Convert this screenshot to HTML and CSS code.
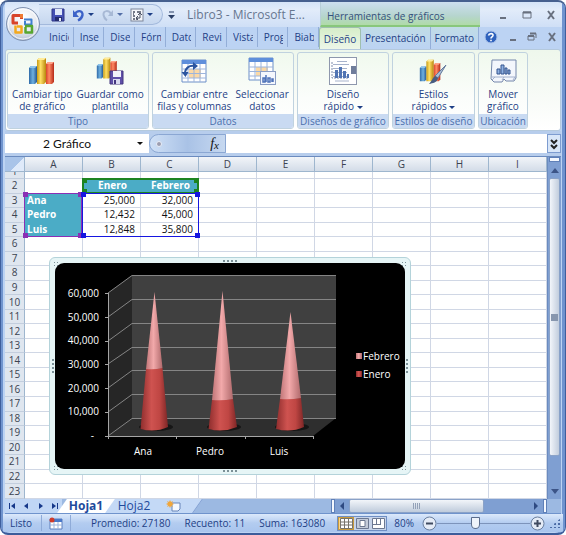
FILE: index.html
```html
<!DOCTYPE html>
<html lang="es">
<head>
  <meta charset="UTF-8">
  <meta name="viewport" content="width=device-width, initial-scale=1.0">
  <title>Libro3 - Microsoft Excel</title>
  <link rel="stylesheet" href="styles.css">
</head>
<body>
<div class="window">
  <!-- Office button -->
  <button class="office-button" aria-label="Botón de Office">
    <svg width="36" height="36" viewBox="0 0 36 36">
      <defs>
        <radialGradient id="orb" cx=".5" cy=".3" r=".75">
          <stop offset="0" stop-color="#fff"/><stop offset=".6" stop-color="#e3e7ef"/><stop offset="1" stop-color="#a9b6cb"/>
        </radialGradient>
      </defs>
      <circle cx="18" cy="18" r="16.5" fill="url(#orb)" stroke="#7f92b2"/>
      <circle cx="18" cy="18" r="15" fill="none" stroke="#fff" opacity=".8"/>
      <g fill="none" stroke-width="3" stroke-linejoin="round">
        <path d="M13 17H8V9.500H16.500V13" stroke="#d8432a"/>
        <path d="M16.500 12V8" stroke="#ee7a32"/>
        <path d="M19 13.500H26.500V18.500H20V15" stroke="#3f7fd0" stroke-width="2"/>
        <path d="M10.500 19.500V26.500H16.500V20.500H12" stroke="#f3a81d" stroke-width="2.500"/>
        <path d="M20 20H27V26.500H20.500V21" stroke="#57a62f" stroke-width="2.500"/>
      </g>
    </svg>
  </button>

  <!-- Title bar -->
  <header class="title-bar">
    <div class="quick-access">
      <button aria-label="Guardar">
        <svg width="14" height="14" viewBox="0 0 14 14"><path d="M1 1h12v12H1z" fill="#4550b4" stroke="#2f3786"/><path d="M4 1h7v6H4z" fill="#dfe8fa"/><path d="M4 9h7v4H4z" fill="#242c6e"/><path d="M8 10h2v3H8z" fill="#e7ecfa"/></svg>
      </button>
      <button class="split" aria-label="Deshacer">
        <svg width="13" height="14" viewBox="0 0 13 14"><path d="M3 6C5 2 11 2 10.500 7C10 10 8 11.500 6 12.500" fill="none" stroke="#3c62c8" stroke-width="2.400"/><path d="M1 2v7h6z" fill="#3c62c8"/></svg>
        <i class="arrow"></i>
      </button>
      <button class="split faded" aria-label="Rehacer">
        <svg width="13" height="14" viewBox="0 0 13 14"><path d="M10 6C8 2 2 2 2.500 7C3 10 4 11 6 12.500" fill="none" stroke="#96a9c8" stroke-width="2"/><path d="M12 2v6H7z" fill="#96a9c8"/></svg>
        <i class="arrow"></i>
      </button>
      <button class="split" aria-label="Seleccionar objetos">
        <svg width="14" height="14" viewBox="0 0 14 14"><rect x="1" y="1" width="12" height="12" fill="#f4f6fa" stroke="#7d869a"/><path d="M3 4h2M7 4h4M3 6h1M3 8h2M3 11h2M6 11h2" stroke="#4a5264" stroke-width="1.500"/><path d="M10 5v5H6M8 8l-2 2 2 2M8 7l2-2 2 2" fill="none" stroke="#4a5264"/></svg>
        <i class="arrow"></i>
      </button>
    </div>
    <button class="customize" aria-label="Personalizar barra"><svg width="8" height="8" viewBox="0 0 8 8"><path d="M2 1h5" stroke="#2b3f66"/><path d="M1 4h7L4.500 8z" fill="#2b3f66"/></svg></button>
    <h1 class="title">Libro3 - Microsoft E...</h1>
    <div class="context-title">Herramientas de gráficos</div>
    <div class="controls">
      <button aria-label="Minimizar"><svg width="10" height="10" viewBox="0 0 10 10"><path d="M2 8h6" stroke="#68707f" stroke-width="2"/></svg></button>
      <button aria-label="Maximizar"><svg width="10" height="10" viewBox="0 0 10 10"><path d="M1 2h8v6H1z" fill="none" stroke="#68707f"/><path d="M1 2.500h8" stroke="#68707f" stroke-width="2"/></svg></button>
      <button aria-label="Cerrar"><svg width="10" height="10" viewBox="0 0 10 10"><path d="M2 1l6 8M8 1L2 9" stroke="#68707f" stroke-width="2"/></svg></button>
    </div>
  </header>

  <!-- Ribbon tabs -->
  <nav class="tabs">
    <div class="main-tabs">
      <button><span>Inicio</span></button>
      <button><span>Insertar</span></button>
      <button><span>Diseño</span></button>
      <button><span>Fórmulas</span></button>
      <button><span>Datos</span></button>
      <button><span>Revisar</span></button>
      <button><span>Vista</span></button>
      <button><span>Prog</span></button>
      <button><span>Biab</span></button>
    </div>
    <div class="context-tabs">
      <button class="active">Diseño</button>
      <button>Presentación</button>
      <button>Formato</button>
    </div>
    <div class="controls">
      <button aria-label="Ayuda"><svg width="14" height="14" viewBox="0 0 14 14"><circle cx="7" cy="7" r="6" fill="#2f62bd" stroke="#a9c0e8"/><path d="M4.500 5.500C5 3 9.500 3 9 5.500C8.800 7 7 7 7 8.500M7 9.800v1.500" fill="none" stroke="#fff" stroke-width="1.600"/></svg></button>
      <button aria-label="Minimizar libro"><svg width="10" height="10" viewBox="0 0 10 10"><path d="M2 8h6" stroke="#68707f" stroke-width="2"/></svg></button>
      <button aria-label="Restaurar libro"><svg width="10" height="10" viewBox="0 0 10 10"><path d="M3 1.500h6V6M1 4h6v4H1z" fill="none" stroke="#68707f"/><path d="M3 1.500h6M1 4h6" stroke="#68707f" stroke-width="2"/></svg></button>
      <button aria-label="Cerrar libro"><svg width="10" height="10" viewBox="0 0 10 10"><path d="M2 1l6 8M8 1L2 9" stroke="#68707f" stroke-width="2"/></svg></button>
    </div>
  </nav>

  <!-- Ribbon -->
  <section class="ribbon">
    <svg width="0" height="0" class="defs">
      <defs>
        <linearGradient id="b1"><stop offset="0" stop-color="#2f6aa8"/><stop offset=".5" stop-color="#6fb1e0"/><stop offset="1" stop-color="#24568f"/></linearGradient>
        <linearGradient id="b2"><stop offset="0" stop-color="#c79a12"/><stop offset=".4" stop-color="#ffe066"/><stop offset="1" stop-color="#b8860b"/></linearGradient>
        <linearGradient id="b3"><stop offset="0" stop-color="#d8442a"/><stop offset=".4" stop-color="#ff8a65"/><stop offset="1" stop-color="#b52a18"/></linearGradient>
        <g id="bars">
          <path d="M1 11l2-2h6v16l-2 2H1z" fill="url(#b1)"/><path d="M1 11l2-2h6l-2 2z" fill="#8cc4ec"/>
          <path d="M9 3l2-2h7v24l-2 2H9z" fill="url(#b2)"/><path d="M9 3l2-2h7l-2 2z" fill="#ffec9a"/>
          <path d="M18 7l2-2h6v20l-2 2h-6z" fill="url(#b3)"/><path d="M18 7l2-2h6l-2 2z" fill="#ffa288"/>
        </g>
        <g id="sheet">
          <path d="M1 1h24v22H1z" fill="#fff" stroke="#6d8fc8"/><path d="M1 1h24v4H1z" fill="#5f8fdb"/>
          <path d="M8 10h12v9H8z" fill="#fbd9a6"/>
          <path d="M1 10h24M1 14.500h24M1 19h24M7 5v18M13 5v18M19 5v18" stroke="#9db5dc" fill="none"/>
        </g>
      </defs>
    </svg>
    <div class="group wide">
      <div class="commands">
        <button><svg width="28" height="28" viewBox="0 0 28 28"><use href="#bars"/></svg><span>Cambiar tipo<br>de gráfico</span></button>
        <button><svg width="28" height="28" viewBox="0 0 28 28"><g transform="scale(.8)"><use href="#bars"/></g><path d="M14 14h13v13H14z" fill="#5f4fa8" stroke="#44367f"/><path d="M17 14h8v6h-8z" fill="#f2f2fa"/><path d="M17 22h7v5h-7z" fill="#d9daf0"/><path d="M18 23h2v4h-2z" fill="#44367f"/></svg><span>Guardar como<br>plantilla</span></button>
      </div>
      <h2>Tipo</h2>
    </div>
    <div class="group wide">
      <div class="commands">
        <button><svg width="28" height="28" viewBox="0 0 28 28"><g transform="translate(1 2)"><use href="#sheet"/></g><path d="M5 17C5 11 9 8 15 9" fill="none" stroke="#2c559f" stroke-width="2"/><path d="M13 5l5 4-5 4zM1.500 15h7l-3 5z" fill="#2c559f"/></svg><span>Cambiar entre<br>filas y columnas</span></button>
        <button><svg width="28" height="28" viewBox="0 0 28 28"><use href="#sheet"/><rect x="12.500" y="14.500" width="15" height="13" fill="#f4f7fd" stroke="#8a9dc4"/><path d="M15 25v-4h2v4zM18 25v-7M20 25v-4h2v4zM24 25v-3h1v3" fill="none" stroke="#4d72b8" stroke-width="1.500"/></svg><span>Seleccionar<br>datos</span></button>
      </div>
      <h2>Datos</h2>
    </div>
    <div class="group layouts">
      <div class="commands">
        <button><svg width="28" height="28" viewBox="0 0 28 28"><rect x=".5" y=".5" width="27" height="27" fill="#fff" stroke="#8e97ad"/><path d="M8 4.500h10M4 7.500h16M4 11.500h14M4 15.500h14M4 19.500h14" stroke="#a7b3cc"/><path d="M3 5v16h17" fill="none" stroke="#7f8cab" stroke-dasharray="2 1"/><path d="M6 21v-8h3v8zM10 21V10h3v11zM14 21v-7h3v7zM18 21v-4h2v4z" fill="#5275b3"/><path d="M22 9h5v8h-5z" fill="#6f7d9b"/><path d="M6 24h14" stroke="#a7b3cc"/></svg><span>Diseño<br>rápido <i class="arrow"></i></span></button>
      </div>
      <h2>Diseños de gráfico</h2>
    </div>
    <div class="group styles">
      <div class="commands">
        <button><svg width="28" height="28" viewBox="0 0 28 28"><g transform="translate(0 2) scale(.82)"><use href="#bars"/></g><path d="M27 8l-8 13-3-2z" fill="#a9bdd6" stroke="#64799b"/><path d="M16 19l3 2c-1 5-5 5-9 6 3-3 3-6 6-8z" fill="#475c82"/></svg><span>Estilos<br>rápidos <i class="arrow"></i></span></button>
      </div>
      <h2>Estilos de diseño</h2>
    </div>
    <div class="group location">
      <div class="commands">
        <button><svg width="28" height="28" viewBox="0 0 28 28"><path d="M3 3h24v18l-2 3h-8l-2-2-2 3H5l-3-3z" fill="#f3f6fc" stroke="#7587ab"/><path d="M3 20h24M3 23l3-3M13 23l2-3M24 23l2-3" stroke="#a2b0cc"/><path d="M8 17v-5h3v5zM12 17V8h3v9zM16 17v-6h2v6zM19 17v-4h2v4z" fill="#8fb0e0" stroke="#34548f"/></svg><span>Mover<br>gráfico</span></button>
      </div>
      <h2>Ubicación</h2>
    </div>
  </section>

  <!-- Formula bar -->
  <div class="formula-bar">
    <label class="name-box"><input type="text" value="2 Gráfico" aria-label="Cuadro de nombres"><i class="arrow"></i></label>
    <button class="insert-function" aria-label="Insertar función"><i class="knob"></i><em>f<sub>x</sub></em></button>
    <input class="formula" type="text" aria-label="Barra de fórmulas">
    <button class="expand" aria-label="Expandir barra de fórmulas"><svg width="10" height="12" viewBox="0 0 10 12"><path d="M2 2l3 3 3-3M2 7l3 3 3-3" fill="none" stroke="#222" stroke-width="2"/></svg></button>
  </div>

  <!-- Worksheet -->
  <main class="workspace">
    <div class="sheet">
      <table class="grid">
        <thead>
          <tr><th class="corner"></th><th>A</th><th>B</th><th>C</th><th>D</th><th>E</th><th>F</th><th>G</th><th>H</th><th>I</th></tr>
        </thead>
        <tbody>
          <tr class="clipped"><th><div>1</div></th><td></td><td></td><td></td><td></td><td></td><td></td><td></td><td></td><td></td></tr>
          <tr><th>2</th><td></td><td class="head">Enero<div class="range series"><i></i><i></i><i></i><i></i></div></td><td class="head">Febrero</td><td></td><td></td><td></td><td></td><td></td><td></td></tr>
          <tr><th>3</th><td class="name">Ana<div class="range categories"><i></i><i></i><i></i><i></i></div></td><td>25,000<div class="range values"><i></i><i></i><i></i><i></i></div></td><td>32,000</td><td></td><td></td><td></td><td></td><td></td><td></td></tr>
          <tr><th>4</th><td class="name">Pedro</td><td>12,432</td><td>45,000</td><td></td><td></td><td></td><td></td><td></td><td></td></tr>
          <tr><th>5</th><td class="name">Luis</td><td>12,848</td><td>35,800</td><td></td><td></td><td></td><td></td><td></td><td></td></tr>
          <tr><th>6</th><td></td><td></td><td></td><td></td><td></td><td></td><td></td><td></td><td></td></tr>
          <tr><th>7</th><td></td><td></td><td></td><td></td><td></td><td></td><td></td><td></td><td></td></tr>
          <tr><th>8</th><td></td><td></td><td></td><td></td><td></td><td></td><td></td><td></td><td></td></tr>
          <tr><th>9</th><td></td><td></td><td></td><td></td><td></td><td></td><td></td><td></td><td></td></tr>
          <tr><th>10</th><td></td><td></td><td></td><td></td><td></td><td></td><td></td><td></td><td></td></tr>
          <tr><th>11</th><td></td><td></td><td></td><td></td><td></td><td></td><td></td><td></td><td></td></tr>
          <tr><th>12</th><td></td><td></td><td></td><td></td><td></td><td></td><td></td><td></td><td></td></tr>
          <tr><th>13</th><td></td><td></td><td></td><td></td><td></td><td></td><td></td><td></td><td></td></tr>
          <tr><th>14</th><td></td><td></td><td></td><td></td><td></td><td></td><td></td><td></td><td></td></tr>
          <tr><th>15</th><td></td><td></td><td></td><td></td><td></td><td></td><td></td><td></td><td></td></tr>
          <tr><th>16</th><td></td><td></td><td></td><td></td><td></td><td></td><td></td><td></td><td></td></tr>
          <tr><th>17</th><td></td><td></td><td></td><td></td><td></td><td></td><td></td><td></td><td></td></tr>
          <tr><th>18</th><td></td><td></td><td></td><td></td><td></td><td></td><td></td><td></td><td></td></tr>
          <tr><th>19</th><td></td><td></td><td></td><td></td><td></td><td></td><td></td><td></td><td></td></tr>
          <tr><th>20</th><td></td><td></td><td></td><td></td><td></td><td></td><td></td><td></td><td></td></tr>
          <tr><th>21</th><td></td><td></td><td></td><td></td><td></td><td></td><td></td><td></td><td></td></tr>
          <tr><th>22</th><td></td><td></td><td></td><td></td><td></td><td></td><td></td><td></td><td></td></tr>
          <tr><th>23</th><td></td><td></td><td></td><td></td><td></td><td></td><td></td><td></td><td></td></tr>
        </tbody>
      </table>

      <!-- Floating chart -->
      <figure class="chart">
        <svg width="350" height="206" viewBox="0 0 350 206">
          <defs>
            <linearGradient id="enero"><stop offset="0" stop-color="#8e2d2d"/><stop offset=".4" stop-color="#cf5350"/><stop offset=".7" stop-color="#bf4643"/><stop offset="1" stop-color="#7d2626"/></linearGradient>
            <linearGradient id="febrero"><stop offset="0" stop-color="#c07577"/><stop offset=".45" stop-color="#f2a9aa"/><stop offset="1" stop-color="#b06a6c"/></linearGradient>
          </defs>
          <path d="M53 30L77 12V155L53 173z" fill="#262626"/>
          <path d="M77 12H281V155H77z" fill="#404040"/>
          <path d="M53 173L77 155H281L258 173z" fill="#2e2e2e"/>
          <g fill="none" stroke="#858585">
            <path d="M53 30L77 12.500H281M53 54L77 36.500H281M53 78L77 60.500H281M53 101L77 84.500H281M53 125L77 107.500H281M53 149L77 131.500H281M53 173L77 155.500H281"/>
            <path d="M53.500 30V173.500H258M50 30.500h3M50 54.500h3M50 78.500h3M50 101.500h3M50 125.500h3M50 149.500h3M50 173.500h3M53.500 173v3M121.500 173v3M190.500 173v3M258.500 173v3" stroke="#a6a6a6"/>
          </g>
          <g fill="#161616"><ellipse cx="101" cy="164" rx="17" ry="4"/><ellipse cx="169" cy="164" rx="17" ry="4"/><ellipse cx="237" cy="164" rx="17" ry="4"/></g>
          <g fill="url(#enero)">
            <path d="M91 106L107.500 105L113 164Q100 170 85.500 166z"/>
            <path d="M157 137L178 136L182 164Q168 170 153.500 166z"/>
            <path d="M225 136L246 135L249 164Q236 170 221 166z"/>
          </g>
          <g fill="url(#febrero)">
            <path d="M99.500 29L107.500 105Q99 107 91 106z"/>
            <path d="M167.500 28L178 136Q168 138 157 137z"/>
            <path d="M235.500 49L246 135Q235 137 225 136z"/>
          </g>
          <g text-anchor="end">
            <text x="44" y="34">60,000</text><text x="44" y="58">50,000</text><text x="44" y="81">40,000</text>
            <text x="44" y="105">30,000</text><text x="44" y="129">20,000</text><text x="44" y="152">10,000</text><text x="39" y="176">-</text>
          </g>
          <g text-anchor="middle">
            <text x="88" y="192">Ana</text><text x="155" y="192">Pedro</text><text x="224" y="192">Luis</text>
          </g>
          <rect x="301" y="90" width="6" height="6" fill="url(#febrero)"/><text x="308" y="97">Febrero</text>
          <rect x="301" y="108" width="6" height="6" fill="url(#enero)"/><text x="308" y="115">Enero</text>
        </svg>
        <i class="grip top"></i><i class="grip bottom"></i><i class="grip left"></i><i class="grip right"></i>
        <i class="corner-grip nw"></i><i class="corner-grip ne"></i><i class="corner-grip sw"></i><i class="corner-grip se"></i>
      </figure>
    </div>
    <div class="v-scroll">
      <i class="splitter"></i>
      <button class="up" aria-label="Arriba"></button>
      <div class="thumb"></div>
      <button class="down" aria-label="Abajo"></button>
    </div>
  </main>

  <!-- Sheet tabs -->
  <div class="sheet-bar">
    <div class="sheet-nav">
      <button aria-label="Primera hoja"><svg width="8" height="8" viewBox="0 0 8 8"><path d="M1 1h1v6H1zM7 1v6L3 4z"/></svg></button>
      <button aria-label="Hoja anterior"><svg width="8" height="8" viewBox="0 0 8 8"><path d="M6 1v6L2 4z"/></svg></button>
      <button aria-label="Hoja siguiente"><svg width="8" height="8" viewBox="0 0 8 8"><path d="M2 1v6l4-3z"/></svg></button>
      <button aria-label="Última hoja"><svg width="8" height="8" viewBox="0 0 8 8"><path d="M1 1v6l4-3zM6 1h1v6H6z"/></svg></button>
    </div>
    <button class="sheet-tab selected">Hoja1</button>
    <button class="sheet-tab">Hoja2</button>
    <button class="sheet-tab new" aria-label="Insertar hoja"><svg width="16" height="12" viewBox="0 0 16 12"><path d="M6 3h8v6l-2 2H6z" fill="#f4f8ff" stroke="#6684b8"/><path d="M4 0l1 2 2-1-1 2 2 1-2 1 1 2-2-1-1 2-1-2-2 1 1-2-2-1 2-1-1-2 2 1z" fill="#f0a63c"/></svg></button>
    <div class="h-scroll">
      <i class="splitter"></i>
      <button aria-label="Izquierda"><svg width="8" height="8" viewBox="0 0 8 8"><path d="M6 0v8L2 4z"/></svg></button>
      <div class="track"><div class="thumb"></div></div>
      <button aria-label="Derecha"><svg width="8" height="8" viewBox="0 0 8 8"><path d="M2 0v8l4-4z"/></svg></button>
      <i class="splitter"></i>
    </div>
  </div>

  <!-- Status bar -->
  <footer class="status-bar">
    <span class="mode">Listo</span>
    <button class="macro" aria-label="Grabar macro"><svg width="14" height="13" viewBox="0 0 14 13"><path d="M1 2h12v10H1z" fill="#fff" stroke="#5c7fbd"/><path d="M1 2h12v3H1z" fill="#4a78c8"/><path d="M1 8h12M5 5v7M9 5v7" stroke="#9db5dc"/><circle cx="3" cy="3" r="2.500" fill="#d03b2a"/></svg></button>
    <div class="stats"><span>Promedio: 27180</span><span>Recuento: 11</span><span>Suma: 163080</span></div>
    <div class="views">
      <button class="on" aria-label="Normal"><svg width="13" height="11" viewBox="0 0 13 11"><path d="M.5.5h12v10H.5zM.5 4h12M.5 7h12M4.500 0v11M8.500 0v11" fill="#fff" stroke="#77736a"/></svg></button>
      <button aria-label="Diseño de página"><svg width="13" height="11" viewBox="0 0 13 11"><path d="M.5.5h12v10H.5z" fill="#c3cbd9" stroke="#6c7891"/><path d="M4 2.500h5v6H4z" fill="#fff" stroke="#6c7891"/></svg></button>
      <button aria-label="Vista previa"><svg width="13" height="11" viewBox="0 0 13 11"><path d="M.5.5h12v10H.5z" fill="#fff" stroke="#6c7891"/><path d="M4.500 0v6M8.500 0v6M0 6.500h9" stroke="#6c7891"/></svg></button>
    </div>
    <button class="percent">80%</button>
    <div class="zoom">
      <button aria-label="Alejar"><svg width="15" height="15" viewBox="0 0 15 15"><circle cx="7.500" cy="7.500" r="6.500" fill="#e4ebf6" stroke="#6a7f9f"/><path d="M4 7.500h7" stroke="#404b60" stroke-width="2"/></svg></button>
      <input type="range" min="0" max="100" value="40" aria-label="Zoom">
      <button aria-label="Acercar"><svg width="15" height="15" viewBox="0 0 15 15"><circle cx="7.500" cy="7.500" r="6.500" fill="#e4ebf6" stroke="#6a7f9f"/><path d="M4 7.500h7M7.500 4v7" stroke="#404b60" stroke-width="2"/></svg></button>
    </div>
    <i class="resize"></i>
  </footer>
</div>
</body>
</html>
```
FILE: styles.css
```css
*, *::before, *::after { box-sizing: border-box; }
body { margin: 0; background: #fff; font-family: "Open Sans", "Noto Sans", sans-serif; font-size: 10px; color: #1e3f86; }
button, input { font: inherit; color: inherit; margin: 0; padding: 0; border: 0; background: none; }
svg { display: block; }
.window {
  position: relative;
  display: flex;
  flex-direction: column;
  height: 100vh;
  padding: 0 4px 1px;
  background: #bcd3f3;
  border: 1px solid #3f5f9d;
  border-top: 2px solid #46608f;
  border-bottom: 2px solid #3c5c9b;
  border-radius: 8px;
  box-shadow: inset -3px 0 0 #6f93cf, inset 2px 0 0 #7094ce;
  overflow: hidden;
}
.arrow { display: inline-block; border: 3px solid transparent; border-top-color: currentColor; border-bottom: 0; vertical-align: middle; }
.office-button { position: absolute; top: 4px; left: 4px; z-index: 2; }

/* Title bar */
.title-bar { display: flex; align-items: center; height: 25px; margin-right: -1px; padding-left: 34px; background: linear-gradient(#d5e4f8, #e2ecfa 30%, #cfdff6); flex: none; }
.quick-access { display: flex; align-items: center; gap: 7px; height: 21px; width: 124px; padding-left: 12px; border: 1px solid #a3b9dc; border-left: 0; border-radius: 0 11px 11px 0; background: linear-gradient(#dce8f8, #c6d7ef); }
.quick-access button { display: flex; align-items: center; gap: 3px; }
.faded { opacity: .7; }
.customize { margin-left: 4px; }
.title { flex: 1; margin: 0 0 0 12px; font-size: 12px; font-weight: 400; line-height: 22px; color: #66768f; white-space: nowrap; overflow: hidden; }
.context-title { width: 160px; height: 25px; padding: 3px 6px 0; line-height: 22px; color: #34507c; background: linear-gradient(#cddff0, #b6d5ce 60%, #b0dba8); border-bottom: 2px solid #88c77b; border-left: 1px solid #b8cfd9; }
.controls { display: flex; align-items: center; justify-content: space-between; width: 82px; padding: 0 6px 0 18px; }

/* Ribbon tabs */
.tabs { display: flex; height: 22px; padding-left: 38px; flex: none; }
.main-tabs { display: flex; flex: 1; min-width: 0; }
.main-tabs button { flex: 1 1 0; min-width: 0; padding: 0 4px 0 6px; border-right: 1px solid #93aed8; margin-bottom: 2px; text-align: left; }
.main-tabs span { display: block; overflow: hidden; white-space: nowrap; line-height: 20px; }
.context-tabs { display: flex; width: 160px; }
.context-tabs button { flex: auto; border-right: 1px solid #93aed8; line-height: 20px; background: linear-gradient(#c0dce6, #bcd3f3); }
.context-tabs .active { background: linear-gradient(#d6edc9, #edf7e8); border: 1px solid #9fbfae; border-bottom: 0; border-radius: 3px 3px 0 0; }
.tabs .controls { padding: 0 4px 2px 5px; }

/* Ribbon */
.ribbon { display: flex; gap: 3px; height: 82px; padding: 2px 2px 1px 1px; flex: none; background: linear-gradient(#eef7ec, #f8fbf7 60%, #fff); border: 1px solid #b4c9dd; border-radius: 3px; }
.defs { position: absolute; }
.group { display: flex; flex-direction: column; border: 1px solid #c0d2df; border-radius: 3px; background: linear-gradient(#f0f9ee, #fbfdfb 60%, #fff); overflow: hidden; }
.group.wide { width: 142px; }
.layouts { width: 92px; }
.styles { width: 83px; }
.location { width: 50px; }
.commands { display: flex; flex: 1; justify-content: space-evenly; }
.commands button { display: flex; flex-direction: column; align-items: center; line-height: 12px; padding-top: 4px; white-space: nowrap; }
.commands svg { margin-bottom: 3px; flex: none; }
.group h2 { margin: 0; font-size: 10px; font-weight: 400; line-height: 14px; text-align: center; color: #4a6fae; background: #c9daf2; white-space: nowrap; }

/* Formula bar */
.formula-bar { display: flex; height: 25px; padding: 3px 0; background: #b7cdec; flex: none; font-family: Lato, Carlito, sans-serif; font-size: 12px; color: #111; }
.name-box { display: flex; align-items: center; width: 144px; padding-right: 6px; background: #fff; }
.name-box input { flex: 1; min-width: 0; padding-left: 38px; }
.insert-function { display: flex; align-items: center; justify-content: space-between; width: 77px; padding: 0 6px; border: 1px solid #8ba7d3; border-radius: 10px 0 0 10px; background: linear-gradient(90deg, #cfe0f6, #a9c2e6 50%, #c6d8f0); font-family: "Liberation Serif", serif; font-size: 14px; line-height: 14px; }
.insert-function sub { font-size: 11px; line-height: 0; vertical-align: -1px; }
.knob { width: 6px; height: 6px; border-radius: 50%; background: #9c9db0; border: 1px solid #e8eef8; }
.formula { flex: 1; min-width: 0; background: #fff; }
.expand { display: flex; align-items: center; justify-content: center; width: 14px; border: 1px solid #7d9cd0; background: #d8e6f8; }

/* Worksheet */
.workspace { display: flex; flex: 1; min-height: 0; border-top: 1px solid #6b8bbf; }
.sheet { position: relative; flex: 1; min-width: 0; background: #fff; }
.grid { width: 100%; height: 100%; border-collapse: separate; border-spacing: 0; table-layout: fixed; font-size: 10px; line-height: 13px; color: #111; }
.grid th { padding: 0; font-weight: 400; color: #3b4350; background: #dfe6ef; border-right: 1px solid #9eb6ce; border-bottom: 1px solid #c3cede; }
.grid thead th { height: 15px; background: linear-gradient(#f2f5f9, #d3dce8); border-bottom-color: #9eb6ce; }
.grid .corner { width: 20px; background: linear-gradient(135deg, #a9c4e9 60%, #dfeafa 60%); }
.grid td { position: relative; padding: 0 5px 0 2px; text-align: right; border-right: 1px solid #d0d7e5; border-bottom: 1px solid #d0d7e5; }
.grid .clipped th { height: 7px; }
.clipped div { height: 6px; overflow: hidden; display: flex; align-items: flex-end; justify-content: center; }
.grid .head, .grid .name { background: #4bacc6; border-color: #4bacc6; color: #fff; font-weight: 700; }
.grid .head { padding: 0 0 0 2px; text-align: center; }
.grid .name { text-align: left; }
.range { position: absolute; z-index: 1; top: -1px; left: -1px; border: 1px solid; }
.series { width: calc(200% + 3px); height: calc(100% + 2px); color: #1d8420; border-width: 2px; }
.categories { width: calc(100% + 1px); height: calc(300% + 4px); color: #8b2fb5; }
.values { width: calc(200% + 3px); height: calc(300% + 4px); color: #1616e0; }
.range i { position: absolute; width: 5px; height: 5px; background: currentColor; }
.range i:nth-child(1) { top: -2px; left: -2px; }
.range i:nth-child(2) { top: -2px; right: -2px; }
.range i:nth-child(3) { bottom: -2px; left: -2px; }
.range i:nth-child(4) { bottom: -2px; right: -2px; }

/* Chart object */
.chart { position: absolute; z-index: 2; top: 100px; left: 44px; margin: 0; padding: 5px; background: #e6f5f6; border: 1px solid #b4d3da; border-radius: 6px; }
.chart > svg { background: #000; border-radius: 9px; }
.chart text { font-size: 10px; fill: #fff; }
.grip { position: absolute; background: repeating-linear-gradient(90deg, #7b9097 0 2px, transparent 2px 4px); }
.grip.top, .grip.bottom { left: 50%; width: 14px; height: 2px; margin-left: -7px; }
.grip.top { top: 2px; }
.grip.bottom { bottom: 2px; }
.grip.left, .grip.right { top: 50%; width: 2px; height: 14px; margin-top: -7px; background: repeating-linear-gradient(#7b9097 0 2px, transparent 2px 4px); }
.grip.left { left: 2px; }
.grip.right { right: 2px; }
.corner-grip { position: absolute; width: 6px; height: 6px; background: radial-gradient(circle, #7b9097 1px, transparent 1px) 0 0 / 3px 3px; }
.nw { top: 3px; left: 3px; }
.ne { top: 3px; right: 3px; }
.sw { bottom: 3px; left: 3px; }
.se { bottom: 3px; right: 3px; }

/* Vertical scrollbar */
.v-scroll { display: flex; flex-direction: column; width: 14px; padding: 0 1px; background: #7f9fd2; border-left: 1px solid #6b8bbf; }
.splitter { flex: none; background: #f4f8fe; border: 1px solid #5f80b8; }
.v-scroll .splitter { height: 5px; }
.v-scroll button { height: 16px; flex: none; }
.up::before, .down::before { content: ""; display: block; width: 0; margin: auto; border: 4px solid transparent; border-bottom: 5px solid #3c5487; border-top: 0; }
.down::before { border-top: 5px solid #3c5487; border-bottom: 0; }
.v-scroll .thumb { flex: 1; margin-bottom: 27px; border: 1px solid #8aa2c8; border-radius: 2px; background: linear-gradient(#8796ae, #8796ae) center / 7px 7px no-repeat, linear-gradient(90deg, #f2f5fa, #c2cddd); }

/* Sheet tabs */
.sheet-bar { display: flex; height: 15px; background: #9cb9e2; border-bottom: 1px solid #6f93cc; flex: none; }
.sheet-nav { display: flex; width: 57px; justify-content: space-around; background: #c0d6f5; fill: #16388a; }
.sheet-nav button, .h-scroll button { display: flex; align-items: center; }
.sheet-tab { position: relative; z-index: 0; width: 48px; line-height: 14px; font-size: 12px; color: #1e4a9c; }
.sheet-tab::before { content: ""; position: absolute; z-index: -1; inset: 0 -4px 0 0; transform: skewX(-35deg); background: #c4d9f6; border-right: 1px solid #7d9cd0; }
.selected { font-weight: 700; }
.selected::before { background: #fff; }
.sheet-tab.new { width: 36px; padding-left: 8px; }
.h-scroll { display: flex; align-items: stretch; width: 216px; margin: 0 14px 0 auto; background: #7f9fd2; fill: #2f4a82; }
.h-scroll .splitter { width: 4px; }
.h-scroll button { width: 14px; justify-content: center; }
.track { display: flex; flex: 1; }
.h-scroll .thumb { width: 75%; border: 1px solid #8aa2c8; border-radius: 2px; background: repeating-linear-gradient(90deg, #93a1b8 0 1px, transparent 1px 2px) center / 7px 6px no-repeat, linear-gradient(#f2f5fa, #bfcbdc); }

/* Status bar */
.status-bar { display: flex; align-items: center; height: 18px; margin: 0 -2px; padding: 0 2px; background: linear-gradient(#dce9fb, #b3ccf0 50%, #a9c5ee); flex: none; white-space: nowrap; }
.mode { width: 36px; padding-left: 5px; }
.macro { width: 30px; height: 16px; padding-left: 7px; border: solid #8fabd8; border-width: 0 1px; flex: none; }
.stats { display: flex; flex: 1; gap: 14px; padding-left: 20px; }
.views { display: flex; border: 1px solid #6f8fc4; height: 15px; }
.views button { width: 16px; display: flex; align-items: center; justify-content: center; background: #c7d4ea; }
.views .on { background: #fbd687; border: 1px solid #c99a3c; }
.percent { margin: 0 8px 0 7px; }
.zoom { display: flex; align-items: center; }
.zoom input { appearance: none; width: 93px; height: 15px; background: linear-gradient(#7d94bb, #7d94bb) center / 100% 1px no-repeat; }
.zoom input::-webkit-slider-thumb { appearance: none; width: 9px; height: 12px; border: 1px solid #5a6c8c; background: #eef3fa; border-radius: 1px 1px 5px 5px; }
.resize { width: 12px; height: 10px; margin-left: 4px; background: radial-gradient(circle, #4b6ba6 1px, transparent 1px) 0 0 / 4px 4px; clip-path: polygon(100% 0, 100% 100%, 0 100%); }
```
